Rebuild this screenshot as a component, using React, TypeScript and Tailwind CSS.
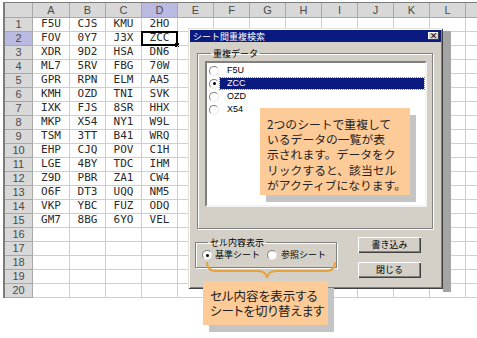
import React from "react";

const cols = ["A", "B", "C", "D", "E", "F", "G", "H", "I", "J", "K", "L"];

const data = [
  ["F5U", "CJS", "KMU", "2HO"],
  ["FOV", "0Y7", "J3X", "ZCC"],
  ["XDR", "9D2", "HSA", "DN6"],
  ["ML7", "5RV", "FBG", "70W"],
  ["GPR", "RPN", "ELM", "AA5"],
  ["KMH", "OZD", "TNI", "SVK"],
  ["IXK", "FJS", "8SR", "HHX"],
  ["MKP", "X54", "NY1", "W9L"],
  ["TSM", "3TT", "B41", "WRQ"],
  ["EHP", "CJQ", "POV", "C1H"],
  ["LGE", "4BY", "TDC", "IHM"],
  ["Z9D", "PBR", "ZA1", "CW4"],
  ["O6F", "DT3", "UQQ", "NM5"],
  ["VKP", "YBC", "FUZ", "ODQ"],
  ["GM7", "8BG", "6YO", "VEL"],
];

const listItems = ["F5U", "ZCC", "OZD", "X54"];

const jp = { fontFamily: '"Noto Sans CJK JP", "Noto Sans", sans-serif' };

const Radio = ({ checked }: { checked?: boolean }) => (
  <div className="w-[10px] h-[10px] shrink-0 rounded-full bg-white border border-[#808080] border-r-[#e8e8e8] border-b-[#e8e8e8] flex items-center justify-center">
    {checked && <div className="w-[3px] h-[3px] rounded-full bg-black" />}
  </div>
);

const Sheet = () => (
  <div className="pt-[2px] pl-[3px]">
    <div className="grid grid-cols-[28px_37px_repeat(11,36px)_1fr] grid-rows-[15px_repeat(20,14px)] border-t border-l-2 border-[#7c7c7c]">
      {/* header row */}
      <div className="bg-[#d8d8d8] border-r border-b border-[#a8a8a8]" />
      {cols.map((c) => (
        <div
          key={c}
          className={`flex items-center justify-center border-r border-b border-[#a8a8a8] text-[11px] text-[#4a4a4a] ${
            c === "D" ? "bg-[#b9b9e2]" : "bg-[#d8d8d8]"
          }`}
          style={{ fontFamily: '"Liberation Sans", sans-serif' }}
        >
          {c}
        </div>
      ))}
      <div className="bg-[#d8d8d8] border-b border-[#a8a8a8]" />

      {Array.from({ length: 20 }).map((_, r) => (
        <React.Fragment key={r}>
          <div
            className={`flex items-center justify-center border-r border-b border-[#a8a8a8] text-[11px] text-[#4a4a4a] ${
              r === 1 ? "bg-[#b9b9e2]" : "bg-[#d8d8d8]"
            }`}
            style={{ fontFamily: '"Liberation Sans", sans-serif' }}
          >
            {r + 1}
          </div>
          {cols.map((c, ci) => (
            <div
              key={c}
              className="relative flex items-center justify-center border-r border-b border-[#cfcfcf] text-[11px] text-[#2a2a2a]"
              style={{ fontFamily: '"DejaVu Sans Mono", monospace' }}
            >
              {ci < 4 && data[r] ? data[r][ci] : ""}
              {r === 1 && ci === 3 && (
                <div className="absolute -left-[1px] -top-[1px] w-[37px] h-[15px] border-2 border-black">
                  <div className="absolute -right-[3px] -bottom-[3px] w-[4px] h-[4px] bg-black" />
                </div>
              )}
            </div>
          ))}
          <div className="border-b border-[#cfcfcf]" />
        </React.Fragment>
      ))}
    </div>
  </div>
);

const btn =
  "w-[65px] h-[18px] flex items-center justify-center bg-[#d4d0c8] text-[9px] text-black shadow-[inset_1px_1px_0_#ffffff,inset_-1px_-1px_0_#404040,inset_-2px_-2px_0_#808080] border border-[#d4d0c8]";

const Dialog = () => (
  <div
    className="absolute left-[188px] top-[28px] w-[255px] h-[261px] p-[2px] bg-[#d4d0c8] shadow-[inset_1px_1px_0_#e4e0d8,inset_-1px_-1px_0_#404040,inset_2px_2px_0_#ffffff,inset_-2px_-2px_0_#808080]"
    style={jp}
  >
    {/* title bar */}
    <div className="h-[12px] bg-[#0a1a7e] flex items-center justify-between pl-[3px] pr-[2px]">
      <span className="text-[9px] leading-[11px] text-white">シート間重複検索</span>
      <div className="w-[11px] h-[8px] bg-[#d4d0c8] flex items-center justify-center text-[8px] leading-none text-black font-bold shadow-[inset_-1px_-1px_0_#404040,inset_1px_1px_0_#ffffff]">
        ×
      </div>
    </div>

    {/* group: 重複データ */}
    <fieldset className="ml-[7px] mt-[6px] w-[236px] h-[181px] border border-[#808080] shadow-[1px_1px_0_#ffffff,inset_1px_1px_0_#ffffff] pl-[7px] pt-[2px]">
      <legend className="ml-[6px] px-[2px] text-[9px] leading-[11px] text-black">重複データ</legend>
      <div className="w-[222px] h-[146px] bg-white border-2 border-[#808080] border-r-[#f4f4f4] border-b-[#f4f4f4] pt-[1px]">
        {listItems.map((it, i) => (
          <div key={it} className="h-[13px] flex items-center pl-[2px]">
            <Radio checked={i === 1} />
            <div
              className={`ml-[1px] flex-1 h-[11px] flex items-center pl-[7px] text-[9px] mr-[1px] ${
                i === 1 ? "bg-[#0a1a7e] text-white outline-1 outline-dotted outline-[#8080a0]" : "text-black"
              }`}
              style={{ fontFamily: '"Liberation Sans", sans-serif' }}
            >
              {it}
            </div>
          </div>
        ))}
      </div>
    </fieldset>

    {/* bottom row */}
    <div className="flex items-start mt-[8px]">
      <fieldset className="ml-[5px] w-[142px] h-[31px] border border-[#808080] shadow-[1px_1px_0_#ffffff,inset_1px_1px_0_#ffffff] pl-[6px] pt-[1px]">
        <legend className="ml-[6px] px-[2px] text-[9px] leading-[11px] text-black">セル内容表示</legend>
        <div className="flex items-center h-[12px]">
          <div className="w-[65px] flex items-center">
            <Radio checked />
            <span className="ml-[3px] text-[9px] text-black whitespace-nowrap">基準シート</span>
          </div>
          <Radio />
          <span className="ml-[4px] text-[9px] text-black whitespace-nowrap">参照シート</span>
        </div>
      </fieldset>
      <div className="ml-[20px] -mt-[1px] flex flex-col gap-[7px]">
        <div className={btn}>書き込み</div>
        <div className={btn}>閉じる</div>
      </div>
    </div>
  </div>
);

export default function App() {
  return (
    <div className="relative w-[477px] h-[338px] overflow-hidden bg-white">
      <Sheet />

      {/* right shadow of dialog */}
      <div className="absolute left-[443px] top-[31px] w-[8px] h-[261px] bg-[#a4a4a4]" />

      <Dialog />

      {/* callout 1 */}
      <div
        className="absolute left-[260px] top-[108px] w-[150px] h-[87px] bg-[#fdcb98] shadow-[6px_7px_0_#c4c4c4] pl-[7px] pt-[8px] text-[11.8px] leading-[15.2px] text-[#222] whitespace-nowrap"
        style={jp}
      >
        2つのシートで重複して
        <br />
        いるデータの一覧が表
        <br />
        示されます。データをク
        <br />
        リックすると、該当セル
        <br />
        がアクティブになります。
      </div>

      {/* brace */}
      <svg className="absolute left-0 top-0" width="477" height="338" viewBox="0 0 477 338">
        <path
          d="M207 262 Q207 271 216 271 L258 271 Q266 271 267 278 Q268 271 276 271 L326 271 Q335 271 335 262"
          fill="none"
          stroke="#e6a23e"
          strokeWidth="2"
        />
      </svg>

      {/* callout 2 */}
      <div
        className="absolute left-[203px] top-[281px] w-[125px] h-[44px] bg-[#fdcb98] shadow-[6px_7px_0_#c4c4c4] pl-[7px] pt-[7px] text-[12.5px] leading-[15px] text-[#222] whitespace-nowrap [font-feature-settings:'palt']"
        style={jp}
      >
        セル内容を表示する
        <br />
        シートを切り替えます
      </div>
    </div>
  );
}
